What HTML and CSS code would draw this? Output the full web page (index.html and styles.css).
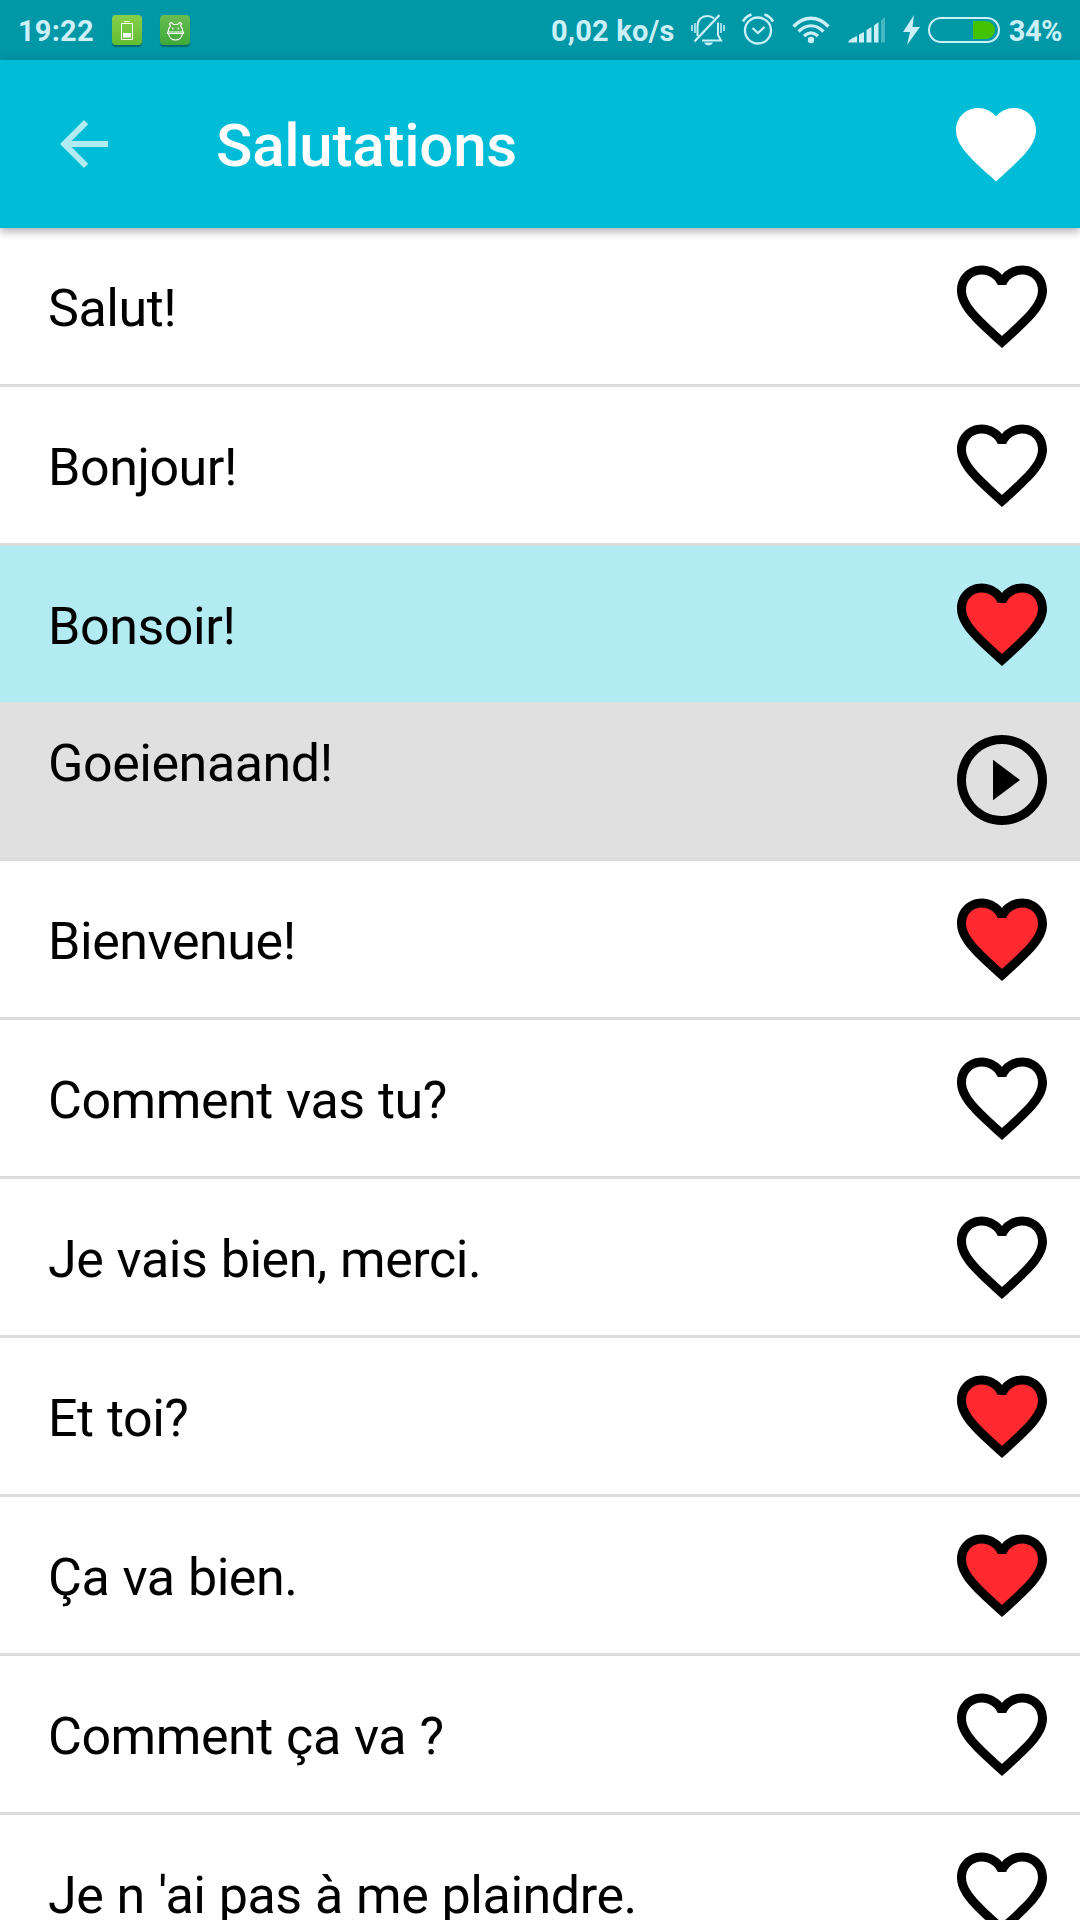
FILE: index.html
```html
<!DOCTYPE html>
<html lang="fr">
<head>
    <meta charset="UTF-8">
    <meta name="viewport" content="width=device-width, initial-scale=1.0">
    <title>Salutations</title>
    <link rel="stylesheet" href="styles.css">
</head>
<body>
    <!-- shared icons -->
    <svg class="sprite">
        <symbol id="heart-full" viewBox="0 0 24 24">
            <path d="M12 21.35l-1.45-1.32C5.4 15.36 2 12.28 2 8.5 2 5.42 4.42 3 7.5 3c1.74 0 3.41.81 4.5 2.09C13.09 3.81 14.76 3 16.5 3 19.58 3 22 5.42 22 8.5c0 3.78-3.4 6.86-8.55 11.54L12 21.35z"/>
        </symbol>
        <symbol id="heart" viewBox="0 0 24 24">
            <path class="heart-fill" d="M12 19.5C7 15 3 12 3 8.5 3 5.9 5 4 7.5 4c1.6 0 3 1 3.6 3h1.8c.6-2 2-3 3.6-3C19 4 21 5.9 21 8.5c0 3.5-4 6.500-9 11z"/>
            <path d="M16.5 3c-1.74 0-3.41.81-4.5 2.09C10.91 3.81 9.24 3 7.5 3 4.42 3 2 5.42 2 8.5c0 3.78 3.4 6.86 8.55 11.54L12 21.35l1.45-1.32C18.6 15.36 22 12.28 22 8.5 22 5.42 19.58 3 16.5 3zm-4.4 15.55l-.1.1-.1-.1C7.14 14.24 4 11.39 4 8.5 4 6.5 5.5 5 7.5 5c1.54 0 3.04.99 3.57 2.36h1.87C13.46 5.99 14.96 5 16.5 5c2 0 3.5 1.5 3.5 3.5 0 2.89-3.14 5.740-7.9 10.05z"/>
        </symbol>
        <symbol id="play" viewBox="0 0 24 24">
            <path d="M10 16.500l6-4.500-6-4.500v9zM12 2C6.480 2 2 6.480 2 12s4.480 10 10 10 10-4.480 10-10S17.520 2 12 2zm0 18c-4.410 0-8-3.590-8-8s3.590-8 8-8 8 3.590 8 8-3.590 8-8 8z"/>
        </symbol>
    </svg>

    <div class="status-bar">
        <span class="time">19:22</span>
        <span class="app-icon battery-app">
            <svg width="30" height="30" viewBox="0 0 30 30" fill="none" stroke="#fff">
                <path d="M9.500 8.500h11v16h-11zM12 6.500h6"/>
                <path d="M11 18h8v4.500h-8z" fill="#fff" stroke="none"/>
            </svg>
        </span>
        <span class="app-icon android-app">
            <svg width="30" height="30" viewBox="0 0 30 30" fill="none" stroke="#fff" stroke-width="1.200">
                <path d="M10.500 11.500L9.500 8.500l2-1 2 2h4l2-2 2 1-1 3M10.500 11c-1.500 1.500-2.500 3.500-2.500 6h15c0-2.500-1-4.500-2.500-6M7.500 17v1.500h16V17M8.500 18.500c.5 4 3.500 6.500 7 6.500s6.500-2.500 7-6.500"/>
                <path d="M12 13.500h1.500M17.500 13.500H19" stroke-width="1.500"/>
            </svg>
        </span>

        <div class="status-right">
            <span class="speed">0,02 ko/s</span>
            <svg class="mute" width="34" height="32" viewBox="0 0 34 32" fill="none" stroke="currentColor" stroke-width="2">
                <path d="M6.500 22V12C6.500 5.500 11 2 16.500 2c3 0 5 1 6.500 2.500M27 8.500V21l3 5.500H11"/>
                <path d="M28.500 1L3.500 27.500" stroke-width="2.300"/>
                <path d="M1 11v6M4 9v10M30 9v10M33 11v6" stroke-width="1.500"/>
                <path d="M13 28.500h9c-1 2-2.500 2.800-4.500 2.800s-3.500-.8-4.500-2.800z" fill="currentColor" stroke="none"/>
            </svg>
            <svg class="alarm" width="32" height="32" viewBox="0 0 32 32" fill="none" stroke="currentColor" stroke-width="2.300">
                <circle cx="16" cy="17.500" r="13"/>
                <path d="M1 8.500C3 5 6 2.500 9.500 1.500M31 8.500C29 5 26 2.500 22.500 1.500" stroke-width="2.800"/>
                <path d="M10.500 15l5.500 5 6.500-6"/>
            </svg>
            <svg class="wifi" width="38" height="28" viewBox="0 0 38 28" fill="none" stroke="currentColor" stroke-width="3.300">
                <path d="M1.500 10.500C12 -.5 26 -.5 36.500 10.500M6.500 15.500c8-7.500 17-7.500 25 0M12 20c4.500-4 9.500-4 14 0"/>
                <circle cx="19" cy="24" r="3.200" fill="currentColor" stroke="none"/>
            </svg>
            <svg class="signal" width="37" height="26" viewBox="0 0 37 26" fill="currentColor">
                <path d="M0 25.500C1 22.500 4 21 9 19v6.500zM11 17.500l5-2.500v10.500h-5zM18.500 13l5-3v15.500h-5zM26 8.500l4.500-3.500v20.500H26z"/>
                <path d="M33 3.500L37 0v25.500h-4z" opacity=".35"/>
            </svg>
            <svg class="bolt" width="17" height="30" viewBox="0 0 17 30" fill="currentColor">
                <path d="M11 0L0 17h7L4 30 17 12H9.500z"/>
            </svg>
            <span class="battery"><span class="level"></span></span>
            <span class="percent">34%</span>
        </div>
    </div>

    <div class="app-bar">
        <svg class="back" viewBox="0 0 24 24"><path d="M20 11H7.830l5.590-5.590L12 4l-8 8 8 8 1.410-1.410L7.830 13H20v-2z"/></svg>
        <h1>Salutations</h1>
        <svg class="favorites"><use href="#heart-full"/></svg>
    </div>

    <ul class="phrases">
        <li class="phrase"><span>Salut!</span><svg class="icon"><use href="#heart"/></svg></li>
        <li class="phrase"><span>Bonjour!</span><svg class="icon"><use href="#heart"/></svg></li>
        <li class="phrase selected"><span>Bonsoir!</span><svg class="icon liked"><use href="#heart"/></svg></li>
        <li class="phrase translation"><span>Goeienaand!</span><svg class="icon"><use href="#play"/></svg></li>
        <li class="phrase"><span>Bienvenue!</span><svg class="icon liked"><use href="#heart"/></svg></li>
        <li class="phrase"><span>Comment vas tu?</span><svg class="icon"><use href="#heart"/></svg></li>
        <li class="phrase"><span>Je vais bien, merci.</span><svg class="icon"><use href="#heart"/></svg></li>
        <li class="phrase"><span>Et toi?</span><svg class="icon liked"><use href="#heart"/></svg></li>
        <li class="phrase"><span>Ça va bien.</span><svg class="icon liked"><use href="#heart"/></svg></li>
        <li class="phrase"><span>Comment ça va ?</span><svg class="icon"><use href="#heart"/></svg></li>
        <li class="phrase"><span>Je n 'ai pas à me plaindre.</span><svg class="icon"><use href="#heart"/></svg></li>
    </ul>
</body>
</html>
```
FILE: styles.css
```css
* {
    box-sizing: border-box;
}
body {
    margin: 0;
    height: 1920px;
    overflow: hidden;
    font-family: Roboto, "Liberation Sans", sans-serif;
    background-color: #fff;
    color: #000;
}
svg {
    display: block;
    flex-shrink: 0;
}
.sprite {
    display: none;
}

/* status bar */
.status-bar {
    display: flex;
    align-items: flex-start;
    height: 60px;
    padding: 0 18px;
    background-color: #0097a7;
    color: #ccf0f8;
    font-size: 29px;
    font-weight: 700;
    line-height: 62px;
    white-space: nowrap;
}
.time {
    width: 94px;
    letter-spacing: 0.2px;
}
.app-icon {
    width: 30px;
    height: 30px;
    margin-top: 15px;
    border-radius: 4px;
    box-shadow: 0 2px 1px rgba(0, 60, 60, 0.5);
}
.battery-app {
    background: linear-gradient(#86d04a, #62bd33);
}
.android-app {
    margin-left: 18px;
    background: linear-gradient(#68bd50, #3ea83a);
}
.status-right {
    display: flex;
    width: 511px;
    margin-left: auto;
}
.speed {
    width: 142px;
    letter-spacing: 0.2px;
}
.mute {
    margin-top: 14px;
}
.alarm {
    margin: 13px 0 0 17px;
}
.wifi {
    margin: 16px 0 0 18px;
}
.signal {
    margin: 17px 0 0 18px;
}
.bolt {
    margin: 15px 0 0 18px;
}
.battery {
    display: flex;
    justify-content: flex-end;
    flex-shrink: 0;
    width: 72px;
    height: 26px;
    margin: 17px 9px 0 8px;
    padding: 2px 3px;
    border: 2px solid #ccf0f8;
    border-radius: 13px;
}
.level {
    width: 22px;
    height: 18px;
    background-color: #43c200;
    border-radius: 0 9px 9px 0;
}
.percent {
    letter-spacing: -0.5px;
}

/* app bar */
.app-bar {
    position: relative;
    display: flex;
    align-items: center;
    height: 168px;
    padding: 0 36px 0 48px;
    background-color: #00bcd7;
    box-shadow: 0 3px 9px rgba(0, 0, 0, 0.35);
}
.back {
    width: 72px;
    height: 72px;
    fill: #b2ebf2;
}
.app-bar h1 {
    flex: 1;
    margin: 0 0 0 96px;
    padding-top: 4px;
    color: #fff;
    font-size: 60px;
    font-weight: 500;
    letter-spacing: -0.2px;
    line-height: 70px;
}
.favorites {
    width: 96px;
    height: 96px;
    fill: #fff;
}

/* list */
.phrases {
    margin: 0;
    padding: 0;
    list-style: none;
}
.phrase {
    display: flex;
    align-items: center;
    justify-content: space-between;
    height: 159px;
    padding: 0 24px 0 48px;
    border-bottom: 3px solid #dcdcdc;
    font-size: 52px;
    letter-spacing: -0.45px;
    line-height: 60px;
    word-spacing: 0.8px;
}
.phrase span {
    padding-top: 6px;
}
.icon {
    width: 108px;
    height: 108px;
}
.heart-fill {
    fill: var(--heart, none);
}
.liked {
    --heart: #ff2a2f;
}
.selected {
    height: 156px;
    border-bottom: none;
    background-color: #b2ebf2;
}
.translation {
    background-color: #e0e0e0;
}
.translation span {
    align-self: flex-start;
    padding-top: 32px;
}
```
